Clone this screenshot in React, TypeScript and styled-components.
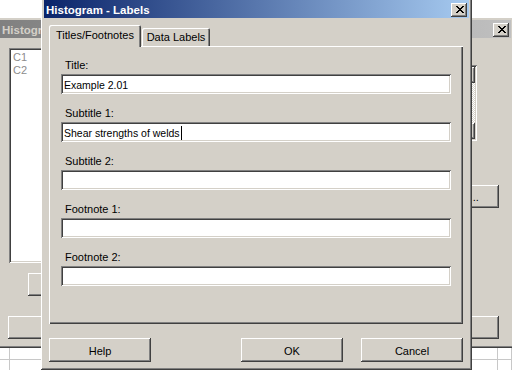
import styled, { createGlobalStyle } from 'styled-components';

const face = '#d4d0c8';
const shadow = '#808080';
const darkShadow = '#404040';

const GlobalStyle = createGlobalStyle`
	body {
		margin: 0;
		font-family: 'Liberation Sans', Arial, sans-serif;
		font-size: 11px;
		color: #000;
	}
	* {
		box-sizing: border-box;
	}
`;

const raised = `
	box-shadow: inset -1px -1px ${darkShadow}, inset 1px 1px #fff, inset -2px -2px ${shadow}, inset 2px 2px ${face};
`;

const sunken = `
	box-shadow: inset 1px 1px ${shadow}, inset -1px -1px #fff, inset 2px 2px ${darkShadow}, inset -2px -2px ${face};
`;

const Desktop = styled.div`
	position: relative;
	width: 512px;
	height: 370px;
	overflow: hidden;
	background: #fff;
`;

const Window = styled.div<{ $left: number; $top: number; $width: number; $height: number }>`
	position: absolute;
	left: ${({ $left }) => $left}px;
	top: ${({ $top }) => $top}px;
	width: ${({ $width }) => $width}px;
	height: ${({ $height }) => $height}px;
	padding: 3px;
	display: flex;
	flex-direction: column;
	background: ${face};
	${raised}
`;

const TitleBar = styled.div<{ $inactive?: boolean }>`
	height: 18px;
	flex: none;
	display: flex;
	align-items: center;
	justify-content: space-between;
	padding: 2px 2px 0 2px;
	overflow: hidden;
	background: ${({ $inactive }) =>
		$inactive ? `linear-gradient(to right, ${shadow}, #c0c0c0)` : 'linear-gradient(to right, #0a246a, #a6caf0)'};
`;

const TitleText = styled.span<{ $inactive?: boolean }>`
	font-size: 11.5px;
	font-weight: bold;
	white-space: nowrap;
	color: ${({ $inactive }) => ($inactive ? face : '#fff')};
`;

const CloseButton = styled.div`
	width: 16px;
	height: 14px;
	flex: none;
	display: flex;
	align-items: center;
	justify-content: center;
	padding: 0 0 1px 1px;
	background: ${face};
	box-shadow: inset -1px -1px ${darkShadow}, inset 1px 1px #fff, inset -2px -2px ${shadow};
`;

const DialogBody = styled.div`
	flex: 1;
	display: flex;
	flex-direction: column;
	padding: 7px 6px 0 5px;
`;

const TabStrip = styled.div`
	height: 21px;
	display: flex;
	align-items: flex-end;
	gap: 1px;
`;

const Tab = styled.div<{ $selected?: boolean; $width: number }>`
	position: relative;
	z-index: 1;
	width: ${({ $width }) => $width}px;
	height: ${({ $selected }) => ($selected ? 22 : 18)}px;
	margin-bottom: ${({ $selected }) => ($selected ? -1 : 0)}px;
	padding-bottom: ${({ $selected }) => ($selected ? 2 : 0)}px;
	display: flex;
	align-items: center;
	justify-content: center;
	background: ${face};
	border-radius: 2px 2px 0 0;
	box-shadow: inset 1px 1px #fff, inset -1px 0 ${darkShadow}, inset -2px 0 ${shadow};
`;

const TabPanel = styled.div`
	height: 278px;
	display: flex;
	flex-direction: column;
	gap: 12px;
	padding: 12px 12px 0;
	box-shadow: inset 1px 1px #fff, inset -1px -1px ${darkShadow}, inset -2px -2px ${shadow};
`;

const Field = styled.div`
	display: flex;
	flex-direction: column;
	gap: 2px;
`;

const FieldLabel = styled.div`
	height: 14px;
	padding-left: 4px;
	line-height: 14px;
`;

const TextInput = styled.div`
	height: 20px;
	display: flex;
	align-items: center;
	padding: 1px 3px 0;
	background: #fff;
	white-space: nowrap;
	font-size: 10.5px;
	${sunken}
`;

const Caret = styled.span`
	display: inline-block;
	width: 1px;
	height: 14px;
	margin-left: 1px;
	background: #000;
`;

const ButtonRow = styled.div`
	margin-top: 14px;
	display: flex;
	justify-content: space-between;
`;

const ButtonGroup = styled.div`
	display: flex;
	gap: 18px;
`;

const PushButton = styled.div<{ $width?: number; $height?: number }>`
	width: ${({ $width }) => $width ?? 102}px;
	height: ${({ $height }) => $height ?? 24}px;
	display: flex;
	align-items: center;
	justify-content: center;
	padding-top: 1px;
	background: ${face};
	white-space: nowrap;
	box-shadow: inset -1px -1px ${darkShadow}, inset 1px 1px #fff, inset -2px -2px ${shadow};
`;

const BackBody = styled.div`
	flex: 1;
	display: flex;
	flex-direction: column;
	padding: 10px 12px 6px 9px;
`;

const BackMain = styled.div`
	display: flex;
	justify-content: space-between;
`;

const LeftColumn = styled.div`
	display: flex;
	flex-direction: column;
	align-items: flex-start;
	gap: 10px;
`;

const VariableList = styled.div`
	width: 120px;
	height: 215px;
	padding: 3px 4px;
	background: #fff;
	color: #8c8c8c;
	line-height: 13px;
	${sunken}
`;

const Indented = styled.div`
	margin-left: 19px;
`;

const RightColumn = styled.div`
	display: flex;
	flex-direction: column;
	align-items: flex-end;
`;

const ScrollList = styled.div`
	width: 120px;
	height: 76px;
	margin: 17px 22px 44px 0;
	display: flex;
	justify-content: flex-end;
	padding: 2px;
	background: #fff;
	${sunken}
`;

const ScrollBar = styled.div`
	width: 16px;
	display: flex;
	flex-direction: column;
`;

const ScrollArrow = styled.div`
	height: 16px;
	background: ${face};
	${raised}
`;

const ScrollTrack = styled.div`
	flex: 1;
	background: repeating-conic-gradient(#fff 0% 25%, ${face} 0% 50%) 0 0 / 2px 2px;
`;

const BackFooter = styled.div`
	margin: auto 0 0 -1px;
	display: flex;
	justify-content: space-between;
`;

const Sheet = styled.div`
	position: absolute;
	left: 0;
	top: 348px;
	width: 512px;
	display: grid;
	grid-template-columns: 10px 488px 1fr;
	grid-auto-rows: 12px;
`;

const SheetCell = styled.div`
	border-right: 1px solid #c8c8c8;
	border-bottom: 1px solid #c8c8c8;
`;

const CloseGlyph = () => (
	<svg width='8' height='7' viewBox='0 0 8 7' shapeRendering='crispEdges'>
		<path
			d='M0 0h2v1H0zM6 0h2v1H6zM1 1h2v1H1zM5 1h2v1H5zM2 2h4v1H2zM3 3h2v1H3zM2 4h4v1H2zM1 5h2v1H1zM5 5h2v1H5zM0 6h2v1H0zM6 6h2v1H6z'
			fill='#000'
		/>
	</svg>
);

const fields = [
	{ label: 'Title:', value: 'Example 2.01' },
	{ label: 'Subtitle 1:', value: 'Shear strengths of welds', focused: true },
	{ label: 'Subtitle 2:', value: '' },
	{ label: 'Footnote 1:', value: '' },
	{ label: 'Footnote 2:', value: '' },
];

export default function App() {
	return (
		<>
			<GlobalStyle />
			<Desktop>
				<Sheet>
					{Array.from({ length: 6 }, (_, i) => (
						<SheetCell key={i} />
					))}
				</Sheet>

				<Window $left={-3} $top={17} $width={517} $height={331}>
					<TitleBar $inactive>
						<TitleText $inactive>Histogram</TitleText>
						<CloseButton>
							<CloseGlyph />
						</CloseButton>
					</TitleBar>
					<BackBody>
						<BackMain>
							<LeftColumn>
								<VariableList>
									<div>C1</div>
									<div>C2</div>
								</VariableList>
								<Indented>
									<PushButton $width={80} $height={23}>
										Select
									</PushButton>
								</Indented>
							</LeftColumn>
							<RightColumn>
								<ScrollList>
									<ScrollBar>
										<ScrollArrow />
										<ScrollTrack />
										<ScrollArrow />
									</ScrollBar>
								</ScrollList>
								<PushButton $width={82} $height={23}>
									Labels...
								</PushButton>
							</RightColumn>
						</BackMain>
						<BackFooter>
							<PushButton $width={100} $height={23}>
								Help
							</PushButton>
							<PushButton $width={100} $height={23}>
								Cancel
							</PushButton>
						</BackFooter>
					</BackBody>
				</Window>

				<Window $left={41} $top={-3} $width={431} $height={373}>
					<TitleBar>
						<TitleText>Histogram - Labels</TitleText>
						<CloseButton>
							<CloseGlyph />
						</CloseButton>
					</TitleBar>
					<DialogBody>
						<TabStrip>
							<Tab $selected $width={92}>
								Titles/Footnotes
							</Tab>
							<Tab $width={68}>Data Labels</Tab>
						</TabStrip>
						<TabPanel>
							{fields.map((field) => (
								<Field key={field.label}>
									<FieldLabel>{field.label}</FieldLabel>
									<TextInput>
										{field.value}
										{field.focused && <Caret />}
									</TextInput>
								</Field>
							))}
						</TabPanel>
						<ButtonRow>
							<PushButton>Help</PushButton>
							<ButtonGroup>
								<PushButton>OK</PushButton>
								<PushButton>Cancel</PushButton>
							</ButtonGroup>
						</ButtonRow>
					</DialogBody>
				</Window>
			</Desktop>
		</>
	);
}
